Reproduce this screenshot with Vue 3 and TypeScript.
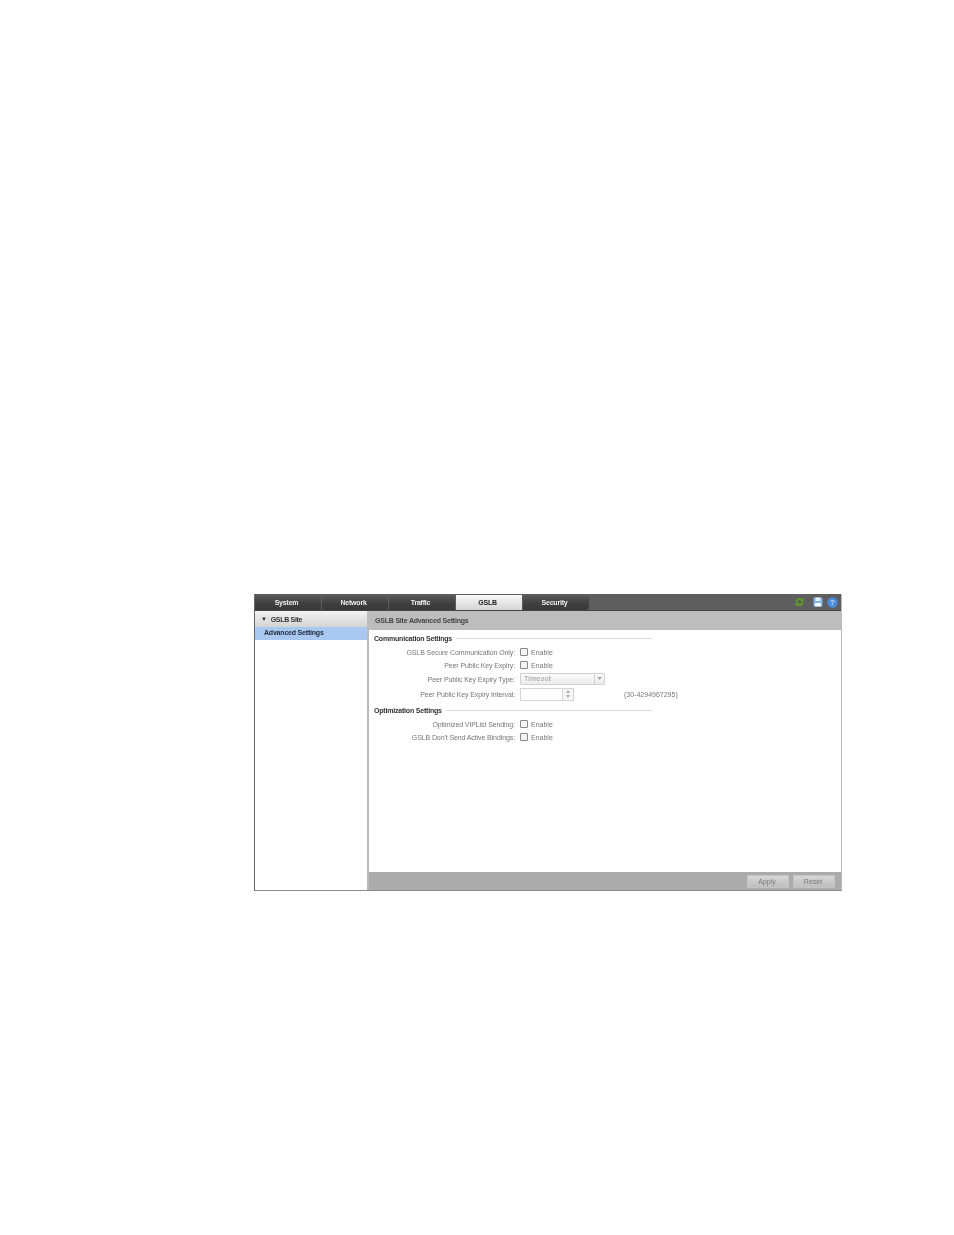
<script setup lang="ts">
const tabs = ['System', 'Network', 'Traffic', 'GSLB', 'Security']
const active = 'GSLB'
interface Row { label: string; kind: 'check' | 'select' | 'spin'; hint?: string }
const comm: Row[] = [
  { label: 'GSLB Secure Communication Only:', kind: 'check' },
  { label: 'Peer Public Key Expiry:', kind: 'check' },
  { label: 'Peer Public Key Expiry Type:', kind: 'select' },
  { label: 'Peer Public Key Expiry Interval:', kind: 'spin', hint: '(30-4294967295)' },
]
const opt: Row[] = [
  { label: 'Optimized VIPList Sending:', kind: 'check' },
  { label: "GSLB Don't Send Active Bindings:", kind: 'check' },
]
const sections = [
  { title: 'Communication Settings', rows: comm },
  { title: 'Optimization Settings', rows: opt },
]
</script>

<template>
  <div class="page">
    <div class="app">
      <div class="topbar">
        <div class="tabs">
          <div v-for="t in tabs" :key="t" class="tab" :class="{ on: t === active }">{{ t }}</div>
        </div>
        <div class="tools">
          <svg class="t-refresh" width="11" height="10" viewBox="0 0 11 10">
            <path d="M1.500 4.500C2 2 4 1 6 1.200c1 .1 1.600.5 2.100 1L9.500 1v3.600H6l1.200-1.200C6 2.400 3.800 2.700 3.300 4.500z" fill="#5fa51f"/>
            <path d="M9.500 5.500C9 8 7 9 5 8.800c-1-.1-1.600-.5-2.100-1L1.500 9V5.400H5L3.800 6.600C5 7.600 7.200 7.300 7.700 5.500z" fill="#5fa51f"/>
          </svg>
          <svg class="t-save" width="10" height="10" viewBox="0 0 10 10">
            <path d="M0.500 0.500h8l1 1v8h-9z" fill="#7eb4ea"/>
            <rect x="2.500" y="0.500" width="5" height="3.500" fill="#e6f0fa"/>
            <rect x="2" y="6" width="6" height="3.500" fill="#f4f7fb"/>
          </svg>
          <svg width="11" height="11" viewBox="0 0 11 11">
            <circle cx="5.500" cy="5.500" r="5.200" fill="#4a8cdc"/>
            <text x="5.500" y="8.300" text-anchor="middle" font-size="8" font-weight="700" fill="#c8dcf5" font-family="Liberation Sans, sans-serif">?</text>
          </svg>
        </div>
      </div>
      <div class="body">
        <aside class="side">
          <div class="side-head"><span class="arrow">▼</span>GSLB Site</div>
          <div class="side-item">Advanced Settings</div>
        </aside>
        <main class="main">
          <div class="main-head">GSLB Site Advanced Settings</div>
          <div class="form">
            <section v-for="s in sections" :key="s.title" class="section">
              <div class="legend"><span>{{ s.title }}</span><i></i></div>
              <div v-for="r in s.rows" :key="r.label" class="row" :class="'row-' + r.kind">
                <label>{{ r.label }}</label>
                <div v-if="r.kind === 'check'" class="check"><b></b><span>Enable</span></div>
                <div v-else-if="r.kind === 'select'" class="select">
                  <span>Timeout</span>
                  <em><svg width="5" height="3" viewBox="0 0 5 3"><path d="M0 0h5L2.500 3z" fill="#aaa"/></svg></em>
                </div>
                <div v-else class="spin">
                  <div class="spin-box">
                    <em>
                      <svg width="4" height="3" viewBox="0 0 4 3"><path d="M0 3h4L2 0z" fill="#aaa"/></svg>
                      <svg width="4" height="3" viewBox="0 0 4 3"><path d="M0 0h4L2 3z" fill="#aaa"/></svg>
                    </em>
                  </div>
                  <span class="hint">{{ r.hint }}</span>
                </div>
              </div>
            </section>
          </div>
          <div class="foot">
            <button type="button">Apply</button>
            <button type="button">Reset</button>
          </div>
        </main>
      </div>
    </div>
  </div>
</template>

<style scoped>
.page {
  box-sizing: border-box;
  width: 954px;
  height: 1235px;
  padding: 594px 0 0 254px;
  background: #fff;
  font-family: "Liberation Sans", Arial, sans-serif;
  font-size: 7px;
  color: #666;
}
.app {
  width: 588px;
  height: 297px;
  display: flex;
  flex-direction: column;
  box-sizing: border-box;
  border-left: 1px solid #666;
  border-right: 1px solid #bbb;
  border-bottom: 1px solid #8c8c8c;
  filter: blur(0.4px);
}
.topbar {
  height: 17px;
  flex: none;
  box-sizing: border-box;
  background: #5e5e5e;
  border-bottom: 1px solid #444;
  display: flex;
  justify-content: space-between;
}
.tabs { display: flex; gap: 1px; }
.tab {
  box-sizing: border-box;
  width: 66px;
  height: 15px;
  margin-top: 1px;
  padding-right: 3px;
  line-height: 15px;
  text-align: center;
  font-weight: 700;
  color: #eee;
  background: linear-gradient(#5a5a5a, #404040 55%, #383838);
  letter-spacing: -0.2px;
}
.tab:last-child { border-radius: 0 3px 3px 0; }
.tab.on { background: linear-gradient(#fafafa, #d4d4d4); color: #222; }
.tools { display: flex; align-items: center; padding-right: 3px; }
.t-refresh { margin-right: 8px; }
.t-save { margin-right: 4px; }
.body { flex: 1; display: flex; min-height: 0; }
.side {
  width: 112px;
  flex: none;
  background: #fff;
  border-right: 2px solid #bbb;
}
.side-head {
  height: 16px;
  line-height: 16px;
  padding-left: 6px;
  font-weight: 700;
  letter-spacing: -0.3px;
  color: #333;
  background: linear-gradient(#f2f2f2, #d4d4d4);
}
.arrow { font-size: 6px; margin-right: 4px; vertical-align: 1px; }
.side-item {
  height: 13px;
  line-height: 12px;
  padding-left: 9px;
  font-weight: 700;
  letter-spacing: -0.2px;
  color: #1f2a3a;
  background: #a9c8f1;
}
.main { flex: 1; display: flex; flex-direction: column; min-width: 0; background: #fff; }
.main-head {
  height: 19px;
  line-height: 20px;
  padding-left: 6px;
  flex: none;
  font-weight: 700;
  letter-spacing: -0.2px;
  color: #444;
  background: #bdbdbd;
}
.form { flex: 1; padding: 1px 0 0 5px; }
.section { width: 278px; margin-bottom: 1px; }
.legend {
  display: flex;
  align-items: center;
  gap: 4px;
  height: 14px;
  font-weight: 700;
  letter-spacing: -0.2px;
  color: #333;
}
.legend i { flex: 1; height: 1px; background: #d6d9d8; }
.row {
  display: flex;
  align-items: center;
  height: 13px;
  white-space: nowrap;
}
.row-select { height: 15px; }
.row-spin { height: 16px; }
label {
  width: 141px;
  padding: 1px 1px 0 0;
  flex: none;
  text-align: right;
  letter-spacing: -0.1px;
  color: #777;
}
.check { margin-left: 4px; display: flex; align-items: center; color: #777; }
.check b {
  width: 6px;
  height: 6px;
  margin-right: 3px;
  border: 1px solid #888;
  border-radius: 1px;
  background: #f4f4f4;
}
.check span { padding-top: 1px; }
.select {
  margin-left: 4px;
  flex: none;
  width: 85px;
  height: 12px;
  box-sizing: border-box;
  border: 1px solid #d0d0d0;
  border-radius: 1px;
  display: flex;
  background: linear-gradient(#fafafa, #ececec);
  color: #999;
  letter-spacing: 0.3px;
  line-height: 10px;
}
.select span { flex: 1; padding-left: 3px; }
.select em {
  width: 9px;
  border-left: 1px solid #d0d0d0;
  display: flex;
  align-items: center;
  justify-content: center;
}
.spin { margin-left: 4px; display: flex; align-items: center; }
.spin-box {
  width: 54px;
  height: 13px;
  box-sizing: border-box;
  border: 1px solid #d4d4d4;
  display: flex;
  justify-content: flex-end;
}
.spin-box em {
  width: 10px;
  border-left: 1px solid #d4d4d4;
  display: flex;
  flex-direction: column;
  align-items: center;
  justify-content: space-around;
  background: #f6f6f6;
}
.hint { margin-left: 50px; color: #777; }
.foot {
  height: 18px;
  flex: none;
  box-sizing: border-box;
  background: #ababab;
  display: flex;
  justify-content: flex-end;
  align-items: center;
  gap: 4px;
  padding-right: 6px;
}
button {
  width: 42px;
  height: 13px;
  padding: 0 2px 0 0;
  border: 0;
  border-radius: 1px;
  background: linear-gradient(#d8d8d8, #bcbcbc);
  box-shadow: 0 0 0 1px #c4c4c4 inset;
  font: 7px "Liberation Sans", Arial, sans-serif;
  color: #777;
}
</style>
